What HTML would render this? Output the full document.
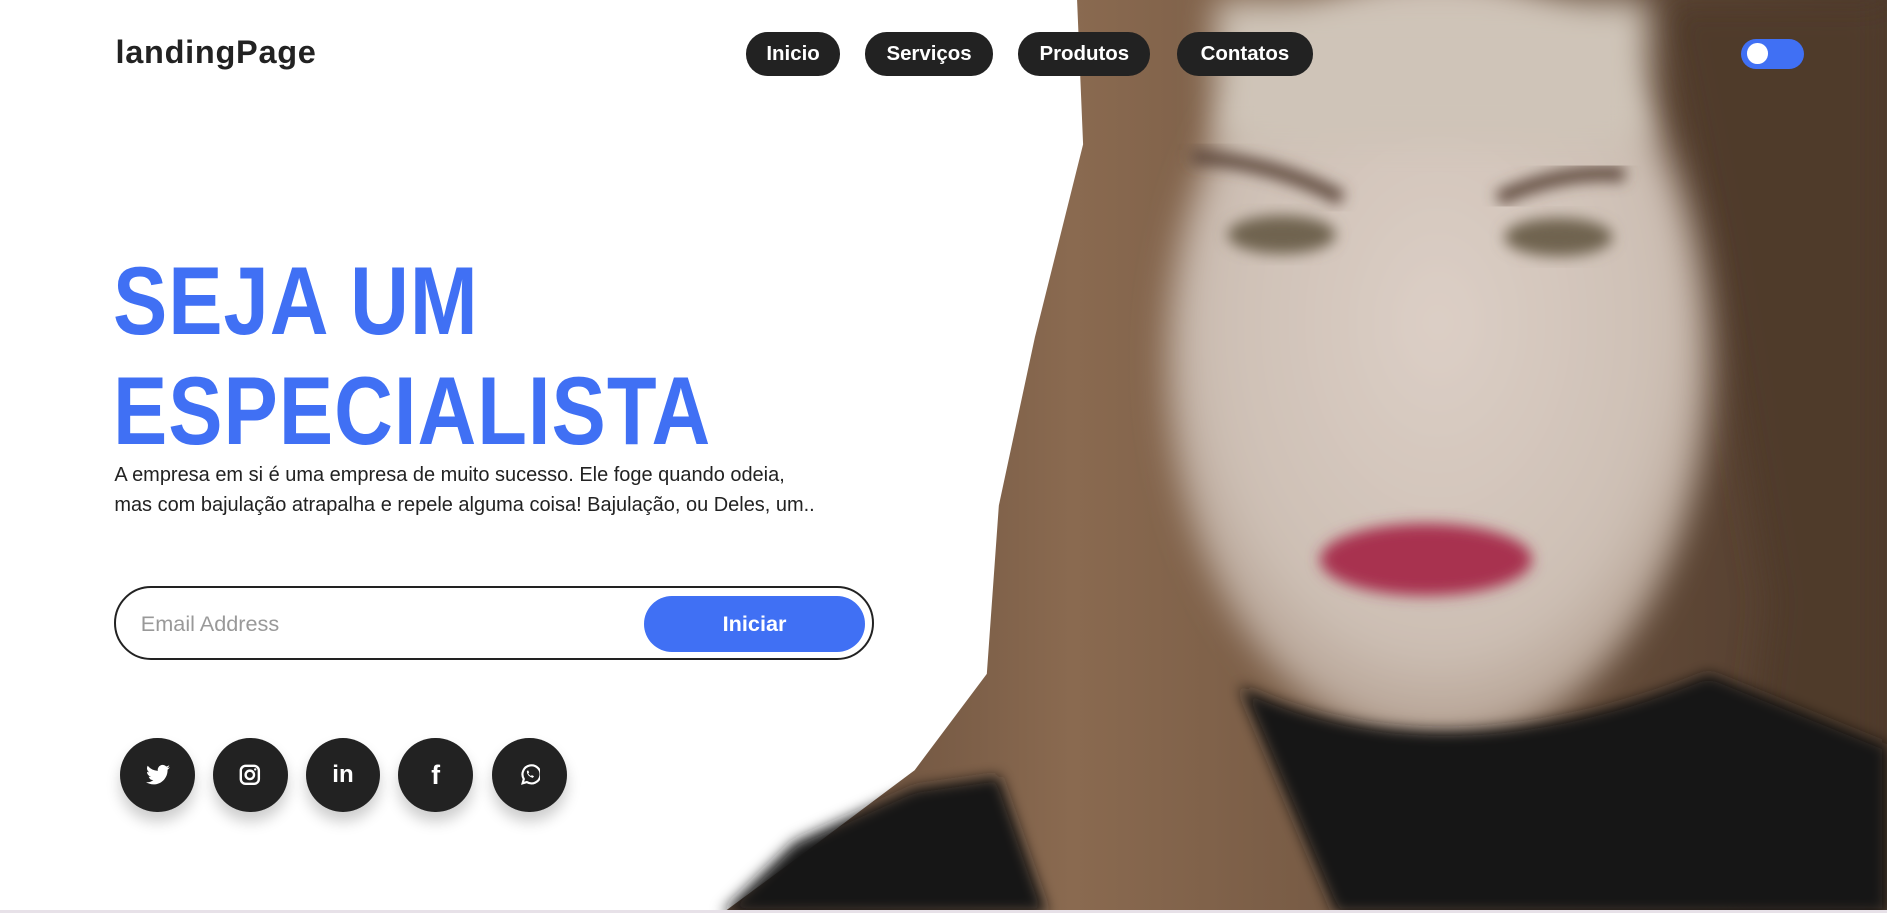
<!DOCTYPE html>
<html><head><meta charset="utf-8"><style>
html,body{margin:0;padding:0;background:#fff;overflow:hidden}
body{width:1568px;height:759px;zoom:1.20344;position:relative;font-family:"Liberation Sans","DejaVu Sans",sans-serif}
.abs{position:absolute}
svg.photo{position:absolute;left:0;top:0}
.logo{left:96px;top:28px;font-size:27px;font-weight:600;color:#222;letter-spacing:0.6px}
.pill{top:27px;height:36px;line-height:36px;background:#222;color:#fff;border-radius:18px;font-size:17px;font-weight:600;text-align:center}
.toggle{left:1447px;top:32px;width:52px;height:25px;background:#4070f4;border-radius:13px}
.toggle:after{content:"";position:absolute;left:5px;top:4px;width:17px;height:17px;border-radius:50%;background:#fff}
h1{position:absolute;left:94px;top:205px;margin:0;font-size:80px;line-height:92px;font-weight:900;color:#4070f4;letter-spacing:1px;transform:scaleX(0.845);transform-origin:left top;white-space:nowrap}
p{position:absolute;left:95px;top:382px;margin:0;width:590px;font-size:16.6px;line-height:25.5px;color:#222}
.box{left:95px;top:487px;width:628px;height:58px;border:2px solid #222;border-radius:31px}
.ph{left:117px;top:508px;font-size:18px;color:#999}
.btn{left:535px;top:495px;width:184px;height:47px;border-radius:24px;background:#4070f4;color:#fff;font-size:18px;line-height:47px;text-align:center;font-weight:600}
.soc{top:613px;width:62px;height:62px;border-radius:50%;background:#222;box-shadow:0 8px 12px rgba(0,0,0,.2);display:flex;align-items:center;justify-content:center;color:#fff}
.line{left:0;top:756px;width:1568px;height:3px;background:#e7e1e8}
</style></head><body>
<svg class="photo" width="1568" height="759" viewBox="0 0 1568 759">
<defs>
<filter id="b" x="-20%" y="-20%" width="140%" height="140%"><feGaussianBlur stdDeviation="14"/></filter>
<filter id="b2" x="-30%" y="-30%" width="160%" height="160%"><feGaussianBlur stdDeviation="6"/></filter>
<linearGradient id="hair" x1="0" y1="0" x2="1" y2="0"><stop offset="0" stop-color="#5e4636"/><stop offset=".3" stop-color="#8a6a50"/><stop offset="1" stop-color="#4e3a2c"/></linearGradient>
<radialGradient id="face" cx=".5" cy=".45" r=".6"><stop offset="0" stop-color="#dccfc6"/><stop offset=".7" stop-color="#cdbfb4"/><stop offset="1" stop-color="#a89282"/></radialGradient>
</defs>
<path d="M895 0 L1568 0 L1568 759 L600 759 L680 700 L760 640 L820 560 L830 420 L860 280 L900 120 Z" fill="url(#hair)"/>
<path d="M1380 0 L1568 0 L1568 759 L1440 759 L1470 500 L1420 200 Z" fill="#4f3a2c" filter="url(#b)"/>
<ellipse cx="1195" cy="300" rx="225" ry="320" fill="url(#face)" filter="url(#b)"/>
<rect x="1010" y="0" width="360" height="120" fill="#cfc4b8" filter="url(#b)"/>
<path d="M1030 570 Q1200 650 1420 560 L1568 620 L1568 759 L1110 759 Z" fill="#141418" filter="url(#b2)"/>
<path d="M600 759 L660 700 L760 655 L830 645 L870 759 Z" fill="#141418" filter="url(#b2)"/>
<path d="M990 130 Q1060 135 1115 165" stroke="#5e4a3e" stroke-width="12" fill="none" filter="url(#b2)"/>
<path d="M1245 165 Q1300 140 1350 145" stroke="#5e4a3e" stroke-width="12" fill="none" filter="url(#b2)"/>
<ellipse cx="1065" cy="195" rx="45" ry="16" fill="#6f6350" filter="url(#b2)"/>
<ellipse cx="1295" cy="197" rx="45" ry="16" fill="#6f6350" filter="url(#b2)"/>
<ellipse cx="1185" cy="465" rx="88" ry="30" fill="#a8334f" filter="url(#b2)"/>
</svg>
<div class="abs logo">landingPage</div>
<div class="abs pill" style="left:620px;width:78px">Inicio</div>
<div class="abs pill" style="left:719px;width:106px">Serviços</div>
<div class="abs pill" style="left:846px;width:110px">Produtos</div>
<div class="abs pill" style="left:978px;width:113px">Contatos</div>
<div class="abs toggle"></div>
<h1>SEJA UM<br>ESPECIALISTA</h1>
<p>A empresa em si é uma empresa de muito sucesso. Ele foge quando odeia, mas com bajulação atrapalha e repele alguma coisa! Bajulação, ou Deles, um..</p>
<div class="abs box"></div>
<div class="abs ph">Email Address</div>
<div class="abs btn">Iniciar</div>
<div class="abs soc" style="left:100px"><svg width="20" height="18" viewBox="0 0 24 20"><path fill="#fff" d="M24 2.4a10 10 0 0 1-2.8.8A5 5 0 0 0 23.3.5a10 10 0 0 1-3.1 1.2A4.9 4.9 0 0 0 11.8 6 14 14 0 0 1 1.7.9a4.9 4.9 0 0 0 1.5 6.6A4.9 4.9 0 0 1 1 6.9a4.9 4.9 0 0 0 3.9 4.9 5 5 0 0 1-2.2.1 4.9 4.9 0 0 0 4.6 3.4A10 10 0 0 1 0 17.3 14 14 0 0 0 7.5 19.5c9 0 14-7.5 14-14v-.6A10 10 0 0 0 24 2.4z"/></svg></div>
<div class="abs soc" style="left:177px"><svg width="18" height="18" viewBox="0 0 18 18"><rect x="1.5" y="1.5" width="15" height="15" rx="4" fill="none" stroke="#fff" stroke-width="2"/><circle cx="9" cy="9" r="3.5" fill="none" stroke="#fff" stroke-width="2"/><circle cx="13.5" cy="4.5" r="1" fill="#fff"/></svg></div>
<div class="abs soc" style="left:254px;font-weight:700;font-size:20px">in</div>
<div class="abs soc" style="left:331px;font-weight:700;font-size:22px">f</div>
<div class="abs soc" style="left:409px"><svg width="18" height="18" viewBox="0 0 18 18"><path d="M3 16 L4 12.5 A7.5 7.5 0 1 1 6.5 15 Z" fill="none" stroke="#fff" stroke-width="1.8"/><path d="M6.5 6 q0 4 5 5.5 l1-1.3 -1.8-1 -0.8.8 q-1.5-.7-2.2-2.2 l.8-.8 -1-1.8z" fill="#fff"/></svg></div>
<div class="abs line"></div>
</body></html>
